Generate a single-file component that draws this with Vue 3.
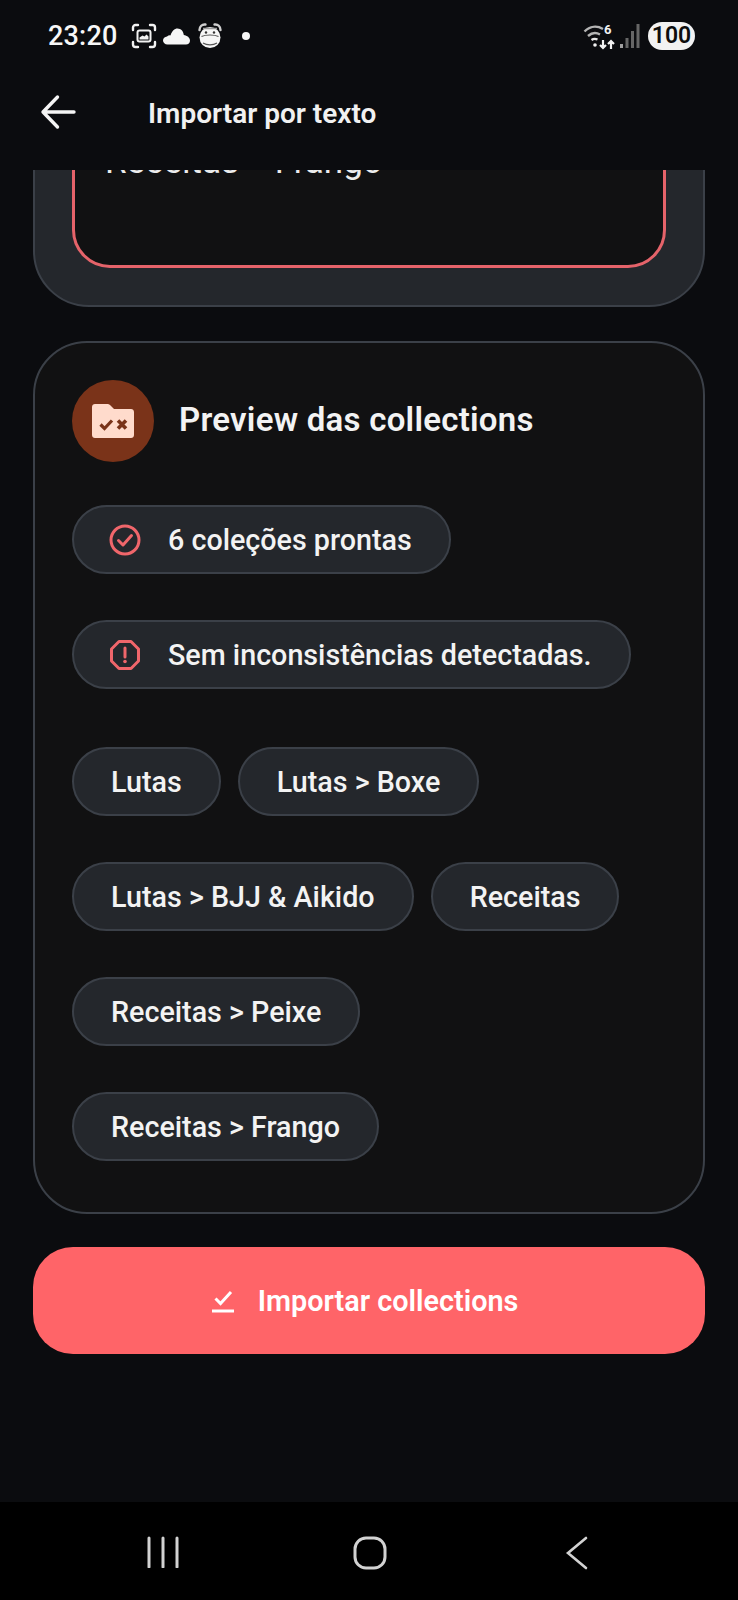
<script setup>
const rows = [
  ['Lutas', 'Lutas > Boxe'],
  ['Lutas > BJJ & Aikido', 'Receitas'],
  ['Receitas > Peixe'],
  ['Receitas > Frango']
]
</script>

<template>
  <div class="phone">
    <header class="status">
      <div class="status-left">
        <span class="time">23:20</span>
        <svg class="st-ic" width="26" height="26" viewBox="0 0 26 26" fill="none" stroke="#f2f2f2" stroke-width="2.400" stroke-linecap="round">
          <path d="M2 7V4.500A2.500 2.500 0 0 1 4.500 2H7M19 2h2.500A2.500 2.500 0 0 1 24 4.500V7M24 19v2.500a2.500 2.500 0 0 1-2.500 2.500H19M7 24H4.500A2.500 2.500 0 0 1 2 21.500V19" />
          <rect x="6.500" y="7.500" width="13" height="11" rx="2" stroke-width="2" />
          <path d="M8.500 16.500v-2l3-2 2 1 2-2 2 2v3z" fill="#f2f2f2" stroke="none" />
        </svg>
        <svg class="st-cloud" width="27" height="17" viewBox="0 0 27 17">
          <path fill="#f6f6f6" d="M4.500 16.500C2 16.500 0 14.800 0 12.500c0-2.200 1.800-3.900 4-4.100C5 7.600 6.300 7.200 7.500 7.400 9 3 11.500.5 14.500.5c3.400 0 6 2.800 6.300 6.500 3.300.4 6.200 2.700 6.200 5.700 0 2.200-1.700 3.800-4 3.800z" />
        </svg>
        <svg class="st-alarm" width="24" height="28" viewBox="0 0 24 28">
          <path d="M1.500 8C1.500 4.500 4 2 7.500 2.500M22.500 8c0-3.500-2.500-6-6-5.500" fill="none" stroke="#cfcfcf" stroke-width="2.400" stroke-linecap="round" />
          <circle cx="12" cy="15.500" r="10.500" fill="#f6f6f6" />
          <path d="M5 6.500h14" stroke="#9a9a9a" stroke-width="1.500" />
          <circle cx="8" cy="10.500" r="1.200" fill="#333" />
          <circle cx="16" cy="10.500" r="1.200" fill="#333" />
          <path d="M3.500 14.500c4-2 13-2 17 0M5 21c4 2.500 10 2.500 14 0" fill="none" stroke="#555" stroke-width="1.200" />
        </svg>
        <span class="dot"></span>
      </div>
      <div class="status-right">
        <svg width="32" height="28" viewBox="0 0 32 28" fill="none">
          <path d="M1.500 9.500C7 4 14 3.500 20 7M5 14c4-3.500 8.500-3.500 12-1.500" stroke="#b4b4b4" stroke-width="2.400" />
          <path d="M8.500 18c2-1.500 4-1.500 6-.5" stroke="#e8e8e8" stroke-width="2.200" />
          <circle cx="12" cy="23" r="1.800" fill="#f2f2f2" />
          <text x="21" y="12" class="wifi6">6</text>
          <path d="M20 18v8M17 23l3 3 3-3M28 27v-8M25 22l3-3 3 3" stroke="#f2f2f2" stroke-width="2.200" />
        </svg>
        <svg class="signal" width="20" height="26" viewBox="0 0 20 26">
          <rect x="0" y="21" width="3" height="4" fill="#a0a0a0" />
          <rect x="5.500" y="15" width="3" height="10" fill="#666" />
          <rect x="11" y="8" width="3" height="17" fill="#666" />
          <rect x="16.500" y="1" width="3" height="24" fill="#666" />
        </svg>
        <span class="battery">100</span>
      </div>
    </header>

    <div class="appbar">
      <svg class="back" width="36" height="36" viewBox="0 0 36 36" fill="none" stroke="#f5f5f5" stroke-width="3.400" stroke-linecap="round" stroke-linejoin="round">
        <path d="M34 18H3M17.500 3 3 18l14.500 15" />
      </svg>
      <h1 class="title">Importar por texto</h1>
    </div>

    <main class="scroll">
      <section class="input-card">
        <div class="input-box">
          <span class="input-text">Receitas &gt; Frango</span>
        </div>
      </section>

      <section class="preview-card">
        <div class="preview-head">
          <div class="avatar">
            <svg width="42" height="34" viewBox="0 0 42 34">
              <path fill="#ffdbcc" d="M3 0h12.500c1 0 1.800.4 2.500 1l4 4h17c1.700 0 3 1.300 3 3v23c0 1.700-1.300 3-3 3H3c-1.700 0-3-1.300-3-3V3c0-1.700 1.300-3 3-3z" />
              <path d="M8.500 20.500 12.500 24.500 20 16.500" fill="none" stroke="#7a3319" stroke-width="3.200" />
              <path d="M26 16.500 34 24.500M34 16.500 26 24.500" fill="none" stroke="#7a3319" stroke-width="3.600" />
            </svg>
          </div>
          <h2 class="preview-title">Preview das collections</h2>
        </div>

        <div class="chip chip-icon">
          <svg width="32" height="32" viewBox="0 0 32 32" fill="none" stroke="#f0666b" stroke-width="3">
            <circle cx="16" cy="16" r="14" />
            <path d="M9.500 16.500 14 21l8.500-9.500" stroke-linecap="round" stroke-linejoin="round" />
          </svg>
          <span>6 coleções prontas</span>
        </div>

        <div class="chip chip-icon chip-second">
          <svg width="32" height="32" viewBox="0 0 32 32" fill="none" stroke="#f0666b" stroke-width="3">
            <path d="M10 2.500h12L29.500 10v12L22 29.500H10L2.500 22V10z" stroke-linejoin="round" />
            <path d="M16 9v9" stroke-linecap="round" />
            <circle cx="16" cy="22.500" r="1.800" fill="#f0666b" stroke="none" />
          </svg>
          <span>Sem inconsistências detectadas.</span>
        </div>

        <div class="chip-rows">
          <div v-for="(row, i) in rows" :key="i" class="chip-row">
            <div v-for="c in row" :key="c" class="chip">{{ c }}</div>
          </div>
        </div>
      </section>

      <button class="cta">
        <svg width="22" height="24" viewBox="0 0 22 24" fill="none" stroke="#fff" stroke-width="3">
          <path d="M3.500 9.500 8.500 14.500 19 3" />
          <path d="M0 22h22" />
        </svg>
        <span>Importar collections</span>
      </button>
    </main>

    <nav class="navbar">
      <svg width="32" height="32" viewBox="0 0 32 32" stroke="#d2d2d2" stroke-width="3" stroke-linecap="round">
        <path d="M2 2v29M16 2v29M30 2v29" />
      </svg>
      <svg class="nav-home" width="34" height="34" viewBox="0 0 34 34" fill="none" stroke="#d2d2d2" stroke-width="3">
        <rect x="2" y="2" width="30" height="30" rx="11" />
      </svg>
      <svg class="nav-back" width="24" height="34" viewBox="0 0 24 34" fill="none" stroke="#d2d2d2" stroke-width="2.600" stroke-linecap="round">
        <path d="M21 2 3 17l18 15" />
      </svg>
    </nav>
  </div>
</template>

<style>
html, body { margin: 0; background: #0b0c0f; }
</style>

<style scoped>
.phone {
  width: 738px;
  height: 1600px;
  display: flex;
  flex-direction: column;
  background: #0b0c0f;
  color: #f5f5f5;
  font-family: Roboto, "Liberation Sans", sans-serif;
  overflow: hidden;
}
.status {
  height: 72px;
  flex: none;
  display: flex;
  justify-content: space-between;
  align-items: center;
  padding: 0 43px 0 48px;
}
.status-left, .status-right { display: flex; align-items: center; }
.time { font-size: 27px; font-weight: 500; color: #f7f7f7; letter-spacing: 0.2px; }
.st-ic { margin-left: 13px; }
.st-cloud { margin-left: 6px; }
.st-alarm { margin-left: 8px; }
.dot { width: 8px; height: 8px; border-radius: 50%; background: #f7f7f7; margin-left: 20px; }
.wifi6 { font: 700 13px Roboto, sans-serif; fill: #f2f2f2; }
.signal { margin-left: 5px; }
.battery {
  margin-left: 8px;
  width: 47px;
  height: 28px;
  border-radius: 14px;
  background: #f2f2f2;
  color: #0d0d0d;
  font-size: 23px;
  font-weight: 600;
  line-height: 28px;
  text-align: center;
}
.appbar {
  height: 98px;
  flex: none;
  display: flex;
  align-items: center;
  padding: 0 0 18px 40px;
  box-sizing: border-box;
}
.back { flex: none; }
.title { margin: 2px 0 0 72px; font-size: 28px; font-weight: 600; color: #f1f1f1; }
.scroll {
  height: 1332px;
  flex: none;
  overflow: hidden;
  padding: 0 33px;
  box-sizing: border-box;
}
.input-card {
  margin-top: -200px;
  height: 337px;
  box-sizing: border-box;
  padding: 0 37px 37px;
  background: #24272c;
  border: 2px solid #3b4048;
  border-radius: 56px;
}
.input-box {
  height: 100%;
  box-sizing: border-box;
  border: 3px solid #e5636a;
  border-radius: 38px;
  background: #111112;
  padding: 167px 0 0 30px;
}
.input-text { font-size: 35px; color: #ececec; line-height: 40px; display: block; }
.preview-card {
  margin-top: 34px;
  height: 873px;
  box-sizing: border-box;
  background: #111112;
  border: 2px solid #3b4048;
  border-radius: 54px;
  padding: 36px 37px 0;
}
.preview-head { display: flex; align-items: center; height: 83px; }
.avatar {
  width: 82px;
  height: 82px;
  flex: none;
  border-radius: 50%;
  background: #7a3319;
  display: flex;
  align-items: center;
  justify-content: center;
}
.preview-title { margin: -2px 0 0 25px; font-size: 33px; font-weight: 600; color: #f3f3f3; letter-spacing: 0.25px; }
.chip {
  display: inline-flex;
  align-items: center;
  height: 69px;
  box-sizing: border-box;
  padding: 0 37px;
  background: #24272c;
  border: 2px solid #3b4048;
  border-radius: 35px;
  font-size: 28.700px;
  font-weight: 500;
  color: #f3f3f3;
  white-space: nowrap;
}
.chip-icon { display: flex; width: fit-content; gap: 27px; padding: 0 37px 0 35px; margin-top: 43px; }
.chip-second { margin-top: 46px; }
.chip-rows { margin-top: 58px; display: flex; flex-direction: column; gap: 46px; }
.chip-row { display: flex; gap: 17px; }
.cta {
  margin-top: 33px;
  width: 672px;
  height: 107px;
  border: none;
  border-radius: 40px;
  background: #ff6468;
  color: #fff;
  font-family: inherit;
  font-size: 28.800px;
  font-weight: 600;
  display: flex;
  align-items: center;
  justify-content: center;
  gap: 24px;
  padding: 0 8px 0 0;
}
.navbar {
  height: 98px;
  flex: none;
  background: #000;
  display: flex;
  align-items: flex-start;
  padding: 34px 0 0 147px;
  box-sizing: border-box;
  gap: 174px;
}
.nav-back { margin-left: 4px; }
</style>
